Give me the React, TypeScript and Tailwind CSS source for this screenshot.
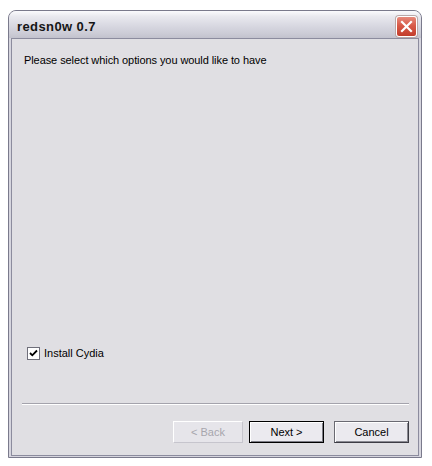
import React from "react";

export default function App() {
  return (
    <div className="w-[432px] h-[466px] bg-white pt-[10px] pl-[8px] [font-family:'Liberation_Sans',Arial,sans-serif]">
      <div className="w-[414px] h-[448px] border border-[#7a7a8c] rounded-t-[8px] overflow-hidden flex flex-col bg-[#d6d5de]">
        {/* Title bar */}
        <div className="h-[27px] shrink-0 flex items-start justify-between pl-[8px] pr-[4px] bg-[linear-gradient(to_bottom,#fbfbfd_0%,#e9e9ef_20%,#d8d8e1_55%,#cbcbd5_85%,#c2c2cd_100%)]">
          <span className="mt-[8px] text-[13px] leading-[15px] font-bold text-[#151515] tracking-[0.4px]">
            redsn0w 0.7
          </span>
          <div className="mt-[5px] w-[21px] h-[21px] rounded-[3px] border border-white bg-[linear-gradient(to_bottom,#e68a7c_0%,#d85a48_45%,#c23d2c_100%)] flex items-center justify-center shadow-[0_0_0_1px_#b8a8a8]">
            <svg width="13" height="13" viewBox="0 0 13 13">
              <path d="M2 2 L11 11 M11 2 L2 11" stroke="white" strokeWidth="2.2" strokeLinecap="square" />
            </svg>
          </div>
        </div>
        {/* Frame */}
        <div className="flex-1 flex flex-col px-[2px] pb-[1px]">
          <div className="flex-1 flex flex-col border border-[#8c8c9e] bg-[#e0dfe3] pt-[15px] pb-[12px]">
            <div className="pl-[12px] text-[11px] leading-[13px] tracking-[-0.08px] text-black">
              Please select which options you would like to have
            </div>
            <div className="flex-1" />
            <div className="h-[13px] flex items-center ml-[15px] gap-[4px]">
              <div className="w-[13px] h-[13px] bg-white border border-[#6f6f7a] flex items-center justify-center">
                <svg width="9" height="9" viewBox="0 0 9 9">
                  <path d="M1 4 L3.3 6.3 L8 1.5" stroke="black" strokeWidth="1.8" fill="none" />
                </svg>
              </div>
              <span className="text-[11px] leading-[13px] text-black">Install Cydia</span>
            </div>
            <div className="mt-[43px] ml-[10px] mr-[9px] h-[2px] border-t border-[#a4a3ac] border-b border-b-white" />
            <div className="mt-[16px] h-[22px] flex justify-end pr-[9px]">
              <div className="w-[70px] h-[22px] border border-[#c6c5cd] border-t-white border-l-white bg-[#e6e5ea] flex items-center justify-center text-[11px] text-[#a6a5ad]">
                &lt; Back
              </div>
              <div className="ml-[6px] w-[75px] h-[22px] border border-black bg-[#ebeaef] shadow-[inset_1px_1px_0_#ffffff,inset_-1px_-1px_0_#7d7d86] flex items-center justify-center text-[11px] text-black">
                Next &gt;
              </div>
              <div className="ml-[10px] w-[75px] h-[22px] border border-[#3c3c44] border-t-[#6a6a72] border-l-[#6a6a72] bg-[#ebeaef] shadow-[inset_1px_1px_0_#ffffff,inset_-1px_-1px_0_#8a8a92] flex items-center justify-center text-[11px] text-black">
                Cancel
              </div>
            </div>
          </div>
        </div>
      </div>
    </div>
  );
}
